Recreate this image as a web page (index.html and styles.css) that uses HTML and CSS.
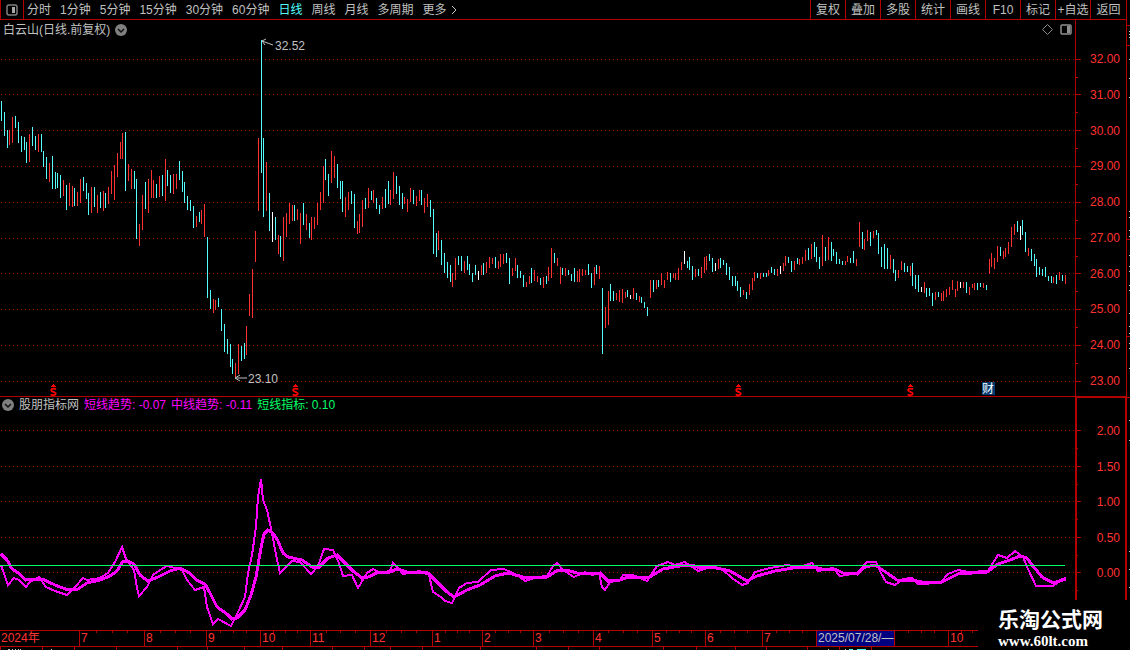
FILE: index.html
```html
<!DOCTYPE html>
<html lang="zh-CN">
<head>
    <meta charset="UTF-8">
    <meta name="viewport" content="width=device-width, initial-scale=1.0">
    <title>白云山 日线</title>
    <link rel="stylesheet" href="styles.css">
</head>
<body>
    <div class="app">
        <main class="main">
            <header class="toolbar">
                <button class="panel-btn" type="button" aria-label="侧栏">
                    <svg width="12" height="12" viewBox="0 0 12 12">
                        <rect x="1" y="1" width="10" height="10" rx="2" fill="none" stroke="#808080" stroke-width="1.5"/>
                        <rect x="6" y="3" width="3" height="6" fill="#a8a8a8"/>
                    </svg>
                </button>
                <nav class="periods">
                    <button type="button">分时</button>
                    <button type="button">1分钟</button>
                    <button type="button">5分钟</button>
                    <button type="button">15分钟</button>
                    <button type="button">30分钟</button>
                    <button type="button">60分钟</button>
                    <button type="button" class="active">日线</button>
                    <button type="button">周线</button>
                    <button type="button">月线</button>
                    <button type="button">多周期</button>
                    <button type="button" class="more">更多
                        <svg width="6" height="10" viewBox="0 0 6 10"><path d="M1 1l4 4-4 4" fill="none" stroke="#c0c0c0"/></svg>
                    </button>
                </nav>
                <div class="tools">
                    <button type="button">复权</button>
                    <button type="button">叠加</button>
                    <button type="button">多股</button>
                    <button type="button">统计</button>
                    <button type="button">画线</button>
                    <button type="button">F10</button>
                    <button type="button">标记</button>
                    <button type="button">+自选</button>
                    <button type="button">返回</button>
                </div>
            </header>

            <!-- K线 -->
            <section class="pane price">
                <div class="pane-title">
                    <span>白云山(日线.前复权)</span>
                    <button class="round" type="button" aria-label="展开">
                        <svg width="12" height="12" viewBox="0 0 12 12"><circle cx="6" cy="6" r="6" fill="#808080"/><path d="M3 5l3 3 3-3" fill="none" stroke="#111" stroke-width="1.5"/></svg>
                    </button>
                </div>
                <div class="pane-icons">
                    <svg width="11" height="11" viewBox="0 0 11 11"><path d="M5.5 .5l5 5-5 5-5-5z" fill="none" stroke="#888"/></svg>
                    <svg width="12" height="11" viewBox="0 0 12 11"><rect x="1" y="1" width="10" height="9" rx="1" fill="none" stroke="#909090" stroke-width="1.5"/><rect x="7" y="2" width="3" height="7" fill="#909090"/></svg>
                </div>
                <svg class="plot" viewBox="0 20 1084 376">
                    <defs>
                        <symbol id="dividend" viewBox="0 0 7 12">
                            <path d="M3 0h1v1h1v1h1v1h-5v-1h1v-1h1z" fill="#f00"/>
                            <path d="M6 5.5C5 4.2 1.2 4.2 1.2 6.2C1.2 8 5.8 7.6 5.8 9.6C5.8 11.5 2 11.5 .8 10.3" fill="none" stroke="#f00" stroke-width="1.8"/>
                        </symbol>
                    </defs>
                    <g transform="translate(0 .5)">
                        <path class="grid" d="M1 59H1075M1 94H1075M1 130H1075M1 166H1075M1 202H1075M1 238H1075M1 273H1075M1 309H1075M1 345H1075M1 381H1075"/>
                        <path class="axis-line" d="M1076 59h5M1076 94h5M1076 130h5M1076 166h5M1076 202h5M1076 238h5M1076 273h5M1076 309h5M1076 345h5M1076 381h5M1076 77h2M1076 112h2M1076 148h2M1076 184h2M1076 220h2M1076 256h2M1076 291h2M1076 327h2M1076 363h2"/>
                    </g>
                    <g transform="translate(.5 0)">
                        <path class="axis-line" d="M1075 20V396"/>
                        <path class="down" d="M1 101V121M4 112V136M7 130V148M15 116V128M18 122V143M21 136V152M24 137V150M26 142V163M32 127V146M35 136V150M41 134V152M43 151V167M46 157V179M52 156V189M55 172V189M57 173V188M60 175V198M66 185V210M74 188V206M83 177V191M86 183V199M88 193V215M94 187V207M100 192V208M105 193V208M125 132V191M134 171V189M136 179V239M145 182V209M156 184V198M162 175V196M167 170V186M170 175V193M179 161V180M182 171V192M184 182V203M187 196V210M190 200V211M193 206V228M199 212V222M207 237V298M210 290V309M218 298V307M221 309V331M224 324V352M227 339V354M230 344V367M232 359V374M241 346V361M244 343V359
                            M261 40V173M263 138V217M269 193V231M275 217V240M280 236V257M294 205V221M303 203V225M309 223V238M325 159V180M328 174V196M337 164V188M340 181V199M342 181V212M351 191V204M354 194V228M365 198V209M371 191V200M376 198V209M379 205V214M385 189V208M388 181V204M396 176V194M399 186V205M402 193V209M413 190V204M421 190V205M430 200V217M433 209V254M436 233V257M441 240V265M444 253V273M447 262V278M450 265V282M458 256V265M461 256V271M467 256V270M469 264V275
                            M472 273V282M475 265V275M483 263V275M495 257V268M506 253V263M509 258V284M517 265V278M520 271V278M523 275V287M531 268V283M540 278V285M546 276V284M554 253V263M562 268V275M568 270V275M571 274V281M574 268V282M588 264V275M591 273V288M596 265V274M602 288V354M610 284V301M613 291V301M627 290V297M636 293V300M641 297V303M644 302V308M647 307V316M653 280V292M658 280V287M670 273V282M687 261V268M689 257V270M692 266V280M698 269V276
                            M709 254V261M712 258V272M720 258V268M723 260V265M726 263V275M729 267V280M732 276V286M735 276V286M737 281V291M740 287V297M746 292V299M757 273V278M763 273V277M766 273V277M771 267V273M774 269V275M788 257V263M791 261V272M797 258V264M808 248V260M814 242V257M816 247V262M819 257V269M825 247V261M831 242V261M833 249V256M836 252V264M839 259V264M842 261V265M850 258V263M853 251V263M862 232V249M870 232V246M876 230V235M878 233V254M881 247V267M884 244V269M887 248V269M893 259V273M895 270V281M904 263V272M907 266V272M912 263V286M915 275V289M918 275V292M926 288V297M929 288V296M932 293V306M938 292V297
                            M966 282V293M977 283V290M980 283V287M986 285V290M1000 247V256M1017 221V232M1022 220V235M1025 232V252M1031 249V261M1034 254V266M1036 259V277M1039 267V275M1042 269V276M1045 267V277M1048 276V281M1051 276V283M1056 275V284M1062 275V281"/>
                        <path class="up" d="M9 130V145M12 117V143M29 134V162M38 134V152M49 163V182M63 180V196M69 183V206M72 186V207M77 192V206M80 179V203M91 187V213M97 195V213M103 191V211M108 187V204M111 171V194M114 165V200M117 153V177M120 142V159M122 133V159M128 164V181M131 169V189M139 224V246M142 195V230M148 179V213M151 170V198M153 180V198M159 176V197M165 159V201M173 174V194M176 174V189M196 216V227M201 210V224M204 204V237M213 299V313M215 300V310M235 363V377M238 344V374M246 326V355M249 294V316M252 269V318M255 231V262M258 138V211
                            M266 162V211M278 235V254M283 217V261M286 213V237M289 203V224M292 205V221M297 209V220M300 213V244M306 214V230M311 217V240M314 217V229M317 203V225M320 192V210M323 166V203M331 151V183M334 156V178M345 197V217M348 192V210M357 221V234M359 214V233M362 200V227M368 188V208M373 190V203M382 197V209M390 190V205M393 172V199M404 197V204M407 199V212M410 188V202M416 196V206M419 190V201M424 198V213M427 194V207M438 231V250M452 273V287M455 258V280M464 261V273
                            M481 265V275M486 262V273M489 257V268M492 258V264M498 261V269M500 254V267M503 254V264M512 268V276M515 258V271M526 282V287M529 276V284M534 270V281M537 276V282M543 277V288M548 267V281M551 248V278M557 258V266M560 267V284M565 268V276M577 271V282M579 269V282M582 269V276M585 270V275M594 267V285M599 266V279M605 307V328M608 291V325M616 293V300M619 290V302M622 289V303M625 292V298M633 288V299M639 296V302M650 280V298M656 280V289M661 273V285M664 280V288M667 272V280M673 273V278M675 273V280M678 268V280M681 262V270M695 269V277
                            M701 267V278M704 257V273M706 256V270M718 259V269M743 290V295M749 284V295M752 278V290M754 272V281M760 273V279M768 270V276M777 269V276M783 263V271M785 256V266M794 261V270M799 259V265M802 257V264M805 250V261M811 244V259M822 235V266M828 237V260M845 261V265M847 256V262M856 259V266M859 222V247M864 239V250M867 230V241M873 231V238M890 255V269M898 270V278M901 261V270M910 266V276M924 282V293M935 292V300
                            M941 293V301M943 291V301M946 289V297M949 287V295M952 280V290M955 289V297M957 281V291M963 282V288M969 287V295M972 284V288M974 283V290M983 283V288M989 259V274M991 253V267M994 258V269M997 246V262M1003 251V259M1005 248V257M1008 242V254M1011 227V247M1014 224V235M1028 248V256M1053 277V283M1059 272V280M1065 275V284"/>
                        <path class="flat" d="M272 212V242M478 271V280M630 295V299M684 251V264M715 263V271M780 266V274M921 287V292M960 282V288M1020 226V240"/>
                    </g>
                    <path class="arrow" d="M262 41l11 4M262 41l4-2M262 41l3 4M235 378h12M235 378l5-3M235 378l5 3"/>
                    <text class="note" x="275" y="50">32.52</text>
                    <text class="note" x="248" y="383">23.10</text>
                    <use href="#dividend" x="50" y="384" width="7" height="12"/>
                    <use href="#dividend" x="292" y="384" width="7" height="12"/>
                    <use href="#dividend" x="735" y="384" width="7" height="12"/>
                    <use href="#dividend" x="907" y="384" width="7" height="12"/>
                    <rect x="982" y="382" width="13" height="13" fill="#003a70"/>
                    <text class="badge" x="982" y="393">财</text>
                </svg>
                <div class="axis">
                    <span>32.00</span>
                    <span>31.00</span>
                    <span>30.00</span>
                    <span>29.00</span>
                    <span>28.00</span>
                    <span>27.00</span>
                    <span>26.00</span>
                    <span>25.00</span>
                    <span>24.00</span>
                    <span>23.00</span>
                </div>
            </section>

            <!-- 指标 -->
            <section class="pane indicator">
                <div class="pane-title">
                    <button class="round" type="button" aria-label="展开">
                        <svg width="12" height="12" viewBox="0 0 12 12"><circle cx="6" cy="6" r="6" fill="#808080"/><path d="M3 5l3 3 3-3" fill="none" stroke="#111" stroke-width="1.5"/></svg>
                    </button>
                    <span>股朋指标网</span>
                    <span class="magenta">短线趋势: -0.07</span>
                    <span class="magenta">中线趋势: -0.11</span>
                    <span class="green">短线指标: 0.10</span>
                </div>
                <svg class="plot" viewBox="0 397 1084 233">
                    <g transform="translate(0 .5)">
                        <path class="grid" d="M1 430H1075M1 466H1075M1 501H1075M1 537H1075M1 572H1075"/>
                        <path class="axis-line" d="M1077 397h7M1077 430h4M1077 466h4M1077 501h4M1077 537h4M1077 572h4M1077 448h1M1077 484h1M1077 519h1M1077 555h1M1077 590h1"/>
                    </g>
                    <path class="axis-line wide" d="M1076 397V630"/>
                    <polyline class="trend" points="1,565 8,585 14,578 19,580 26,587 30,582 39,577 46,587 55,591 67,595 75,587 83,578 87,580 100,578 108,573 115,562 122,547 126,559 134,570 137,588 139,596 147,587 153,575 160,570 167,566 182,570 187,580 195,590 204,587 207,607 213,624 218,619 231,626 238,612 245,597 248,573 252,555 256,527 258,497 261,479 263,500 267,510 272,533 276,555 280,573 283,570 292,561 300,562 311,574 318,566 324,549 333,550 339,563 343,576 352,575 358,588 367,573 373,569 380,573 390,571 393,563 397,567 403,574 420,571 429,575 433,592 441,597 445,601 452,603 459,588 467,583 478,582 491,570 504,569 517,575 525,581 537,577 547,576 553,566 557,563 563,570 574,577 585,572 592,575 599,573 602,587 605,590 610,582 620,580 623,575 633,575 647,581 657,566 668,562 675,565 685,562 698,571 710,567 723,570 732,578 742,585 748,583 755,572 770,568 787,565 800,567 812,563 818,571 833,568 840,576 857,573 867,562 876,562 880,571 886,582 895,585 903,579 912,578 918,584 940,583 948,574 958,570 968,572 988,571 998,555 1007,558 1015,551 1023,557 1028,569 1036,586 1053,586 1062,579 1066,578"/>
                    <polyline class="trend mid" points="1,554 7,560 12,569 17,572 26,580 42,579 55,585 68,590 78,589 87,583 100,580 110,576 117,571 123,561 128,561 134,564 140,575 148,581 158,577 170,571 180,568 188,572 198,581 205,584 210,593 217,607 227,614 232,619 237,618 245,610 251,595 256,577 259,559 262,543 264,534 268,530 273,533 278,541 283,553 288,557 302,560 312,567 319,567 328,558 337,555 343,561 353,571 362,578 368,577 377,573 390,572 397,569 407,572 428,573 437,582 447,592 454,597 467,590 480,585 495,576 508,573 527,578 547,577 558,570 567,570 580,574 600,573 608,581 620,580 628,577 648,578 663,569 680,566 692,565 700,568 712,567 730,571 737,575 747,581 757,576 775,571 793,568 813,567 822,569 835,569 843,573 857,574 865,567 875,565 887,573 897,580 912,580 922,582 933,583 942,582 958,574 987,572 998,564 1010,560 1020,556 1027,558 1033,566 1042,577 1053,583 1066,579"/>
                    <path class="level" transform="translate(0 .5)" d="M0 565H1065"/>
                </svg>
                <div class="axis">
                    <span>2.00</span>
                    <span>1.50</span>
                    <span>1.00</span>
                    <span>0.50</span>
                    <span>0.00</span>
                </div>
            </section>

            <div class="months">
                <span class="first">2024年</span>
                <span>7</span>
                <span>8</span>
                <span>9</span>
                <span>10</span>
                <span>11</span>
                <span>12</span>
                <span>1</span>
                <span>2</span>
                <span>3</span>
                <span>4</span>
                <span>5</span>
                <span>6</span>
                <span>7</span>
                <span class="current">2025/07/28/—</span>
                <span></span>
                <span class="last">10</span>
            </div>
            <svg class="status" viewBox="0 647 1126 3" aria-hidden="true">
                <path fill="#b40000" d="M0 647h1v3h-1zM42 647h1v3h-1zM74 647h1v3h-1zM116 647h1v3h-1zM177 647h1v3h-1zM207 647h1v3h-1zM244 647h1v3h-1zM282 647h1v3h-1zM332 647h1v3h-1zM364 647h1v3h-1zM390 647h1v3h-1zM422 647h1v3h-1zM480 647h1v3h-1zM536 647h1v3h-1zM568 647h1v3h-1zM599 647h1v3h-1zM663 647h1v3h-1zM696 647h1v3h-1zM735 647h1v3h-1zM766 647h1v3h-1zM807 647h1v3h-1zM839 647h1v3h-1zM871 647h1v3h-1z"/>
                <path fill="#c0c0c0" d="M8 649h2v1h-2zM12 649h1v1h-1zM15 649h1v1h-1zM18 649h1v1h-1zM20 649h1v1h-1zM51 649h1v1h-1zM828 649h1v1h-1zM845 649h1v1h-1z"/>
                <path fill="#54fcfc" d="M849 649h4v1h-4zM857 649h9v1h-9z"/>
            </svg>
        </main>
        <aside class="edge">
            <svg width="3" height="600" viewBox="1127 0 3 600" aria-hidden="true">
                <path fill="#b40000" d="M1127 25h3v1h-3zM1127 45h3v1h-3zM1127 239h3v1h-3zM1127 336h3v1h-3zM1127 397h3v1h-3z"/>
                <path fill="#c0c0c0" d="M1129 31h1v1h-1zM1129 34h1v1h-1zM1129 37h1v1h-1zM1129 59h1v1h-1zM1129 78h1v1h-1zM1129 97h1v1h-1zM1129 211h1v1h-1zM1129 217h1v1h-1zM1129 230h1v1h-1zM1129 236h1v1h-1zM1129 255h1v1h-1zM1129 266h1v1h-1zM1129 271h1v1h-1zM1129 285h1v1h-1zM1129 290h1v1h-1zM1129 313h1v1h-1zM1129 326h1v1h-1zM1129 333h1v1h-1zM1129 343h1v1h-1zM1129 348h1v1h-1zM1129 368h1v1h-1zM1129 420h1v1h-1zM1129 440h1v1h-1zM1129 551h1v1h-1zM1129 569h1v1h-1zM1129 587h1v1h-1z"/>
            </svg>
        </aside>
        <div class="watermark">
            <strong>乐淘公式网</strong>
            <span>www.60lt.com</span>
        </div>
    </div>
</body>
</html>
```
FILE: styles.css
```css
* {
    box-sizing: border-box;
}
body {
    margin: 0;
    background-color: #000;
    color: #c0c0c0;
    font-family: "Liberation Sans", "Noto Sans CJK SC", sans-serif;
    font-size: 12px;
    line-height: 14px;
}
button {
    margin: 0;
    padding: 0;
    border: 0;
    background: none;
    color: inherit;
    font: inherit;
    white-space: nowrap;
    cursor: pointer;
}
svg {
    display: block;
}
.app {
    position: relative;
    display: flex;
    overflow: hidden;
}
.main {
    flex: 1;
    min-width: 0;
}
.edge {
    width: 4px;
    border-left: 1px solid #b40000;
}

/* 顶部工具栏 */
.toolbar {
    display: flex;
    height: 20px;
    border-bottom: 1px solid #b40000;
}
.panel-btn {
    display: flex;
    align-items: center;
    justify-content: center;
    width: 24px;
    border-left: 1px solid #b40000;
    border-right: 1px solid #b40000;
}
.periods {
    display: flex;
    flex: 1;
    gap: 9px;
    padding-left: 3px;
}
.periods .active {
    color: #54fcfc;
}
.periods .more {
    display: flex;
    align-items: center;
    gap: 4px;
}
.tools {
    display: grid;
    grid-template-columns: repeat(8, 35px) 36px;
}
.tools button {
    border-left: 1px solid #b40000;
}

/* 图表区 */
.pane {
    position: relative;
    display: flex;
}
.price {
    border-bottom: 1px solid #b40000;
}
.plot {
    flex: 1;
    min-width: 0;
    align-self: flex-start;
}
.pane-title {
    position: absolute;
    top: 3px;
    left: 3px;
    display: flex;
    align-items: center;
    gap: 5px;
}
.indicator .pane-title {
    top: 1px;
    left: 2px;
}
.pane-icons {
    position: absolute;
    top: 4px;
    right: 54px;
    display: flex;
    align-items: center;
    gap: 7px;
}
.axis {
    display: flex;
    flex-direction: column;
    justify-content: space-between;
    width: 42px;
    padding: 32px 6px 8px 0;
    color: #ff3232;
    text-align: right;
}
.indicator .axis {
    padding: 26px 5px 50px 0;
    border-top: 1px solid #b40000;
    border-right: 1px solid #b40000;
}
.magenta {
    color: #f0f;
}
.green {
    color: #00ff66;
}

.grid,
.axis-line,
.up,
.down,
.flat,
.level {
    fill: none;
    stroke-width: 1;
    shape-rendering: crispEdges;
}
.grid {
    stroke: #a00000;
    stroke-dasharray: 1 3;
}
.axis-line {
    stroke: #b40000;
}
.wide {
    stroke-width: 2;
}
.up {
    stroke: #ff3232;
}
.down {
    stroke: #54fcfc;
}
.flat {
    stroke: #fff;
}
.level {
    stroke: #00ff66;
}
.arrow {
    fill: none;
    stroke: #c0c0c0;
}
.note {
    fill: #c0c0c0;
}
.badge {
    fill: #fff;
}
.trend {
    fill: none;
    stroke: #f0f;
    stroke-width: 2;
    shape-rendering: crispEdges;
}
.mid {
    stroke-width: 3;
}

/* 时间轴 */
.months {
    display: grid;
    grid-template-columns: 79fr 65fr 62fr 54fr 50fr 60fr 62fr 50fr 51fr 60fr 59fr 53fr 57fr 54fr 78fr 54fr 178fr;
    height: 17px;
    border-top: 1px solid #b40000;
    border-bottom: 1px solid #b40000;
    color: #ff3232;
}
.months span {
    min-width: 0;
    overflow: hidden;
    padding-left: 1px;
    border-left: 1px solid #b40000;
    white-space: nowrap;
    /* 周刻度 */
    background-image: linear-gradient(#b40000, #b40000), linear-gradient(#b40000, #b40000), linear-gradient(#b40000, #b40000);
    background-size: 1px 2px;
    background-position: 25% 0, 50% 0, 75% 0;
    background-repeat: no-repeat;
}
.months .first {
    border-left: 0;
    background: none;
}
.months .current {
    background: #000080;
    color: #c0c0c0;
}
.months .last {
    background-position: 7% 0, 13% 0, 50% 0;
}
.status {
    width: 100%;
}

.watermark {
    position: absolute;
    right: 0;
    bottom: 0;
    display: flex;
    flex-direction: column;
    width: 152px;
    height: 50px;
    padding: 4px 0 0 20px;
    background-color: #000;
    color: #fff;
}
.watermark strong {
    font-family: "Noto Sans CJK SC", sans-serif;
    font-size: 21px;
    line-height: 28px;
}
.watermark span {
    font-family: "Liberation Serif", serif;
    font-size: 15px;
    font-weight: bold;
    line-height: 18px;
}
```
